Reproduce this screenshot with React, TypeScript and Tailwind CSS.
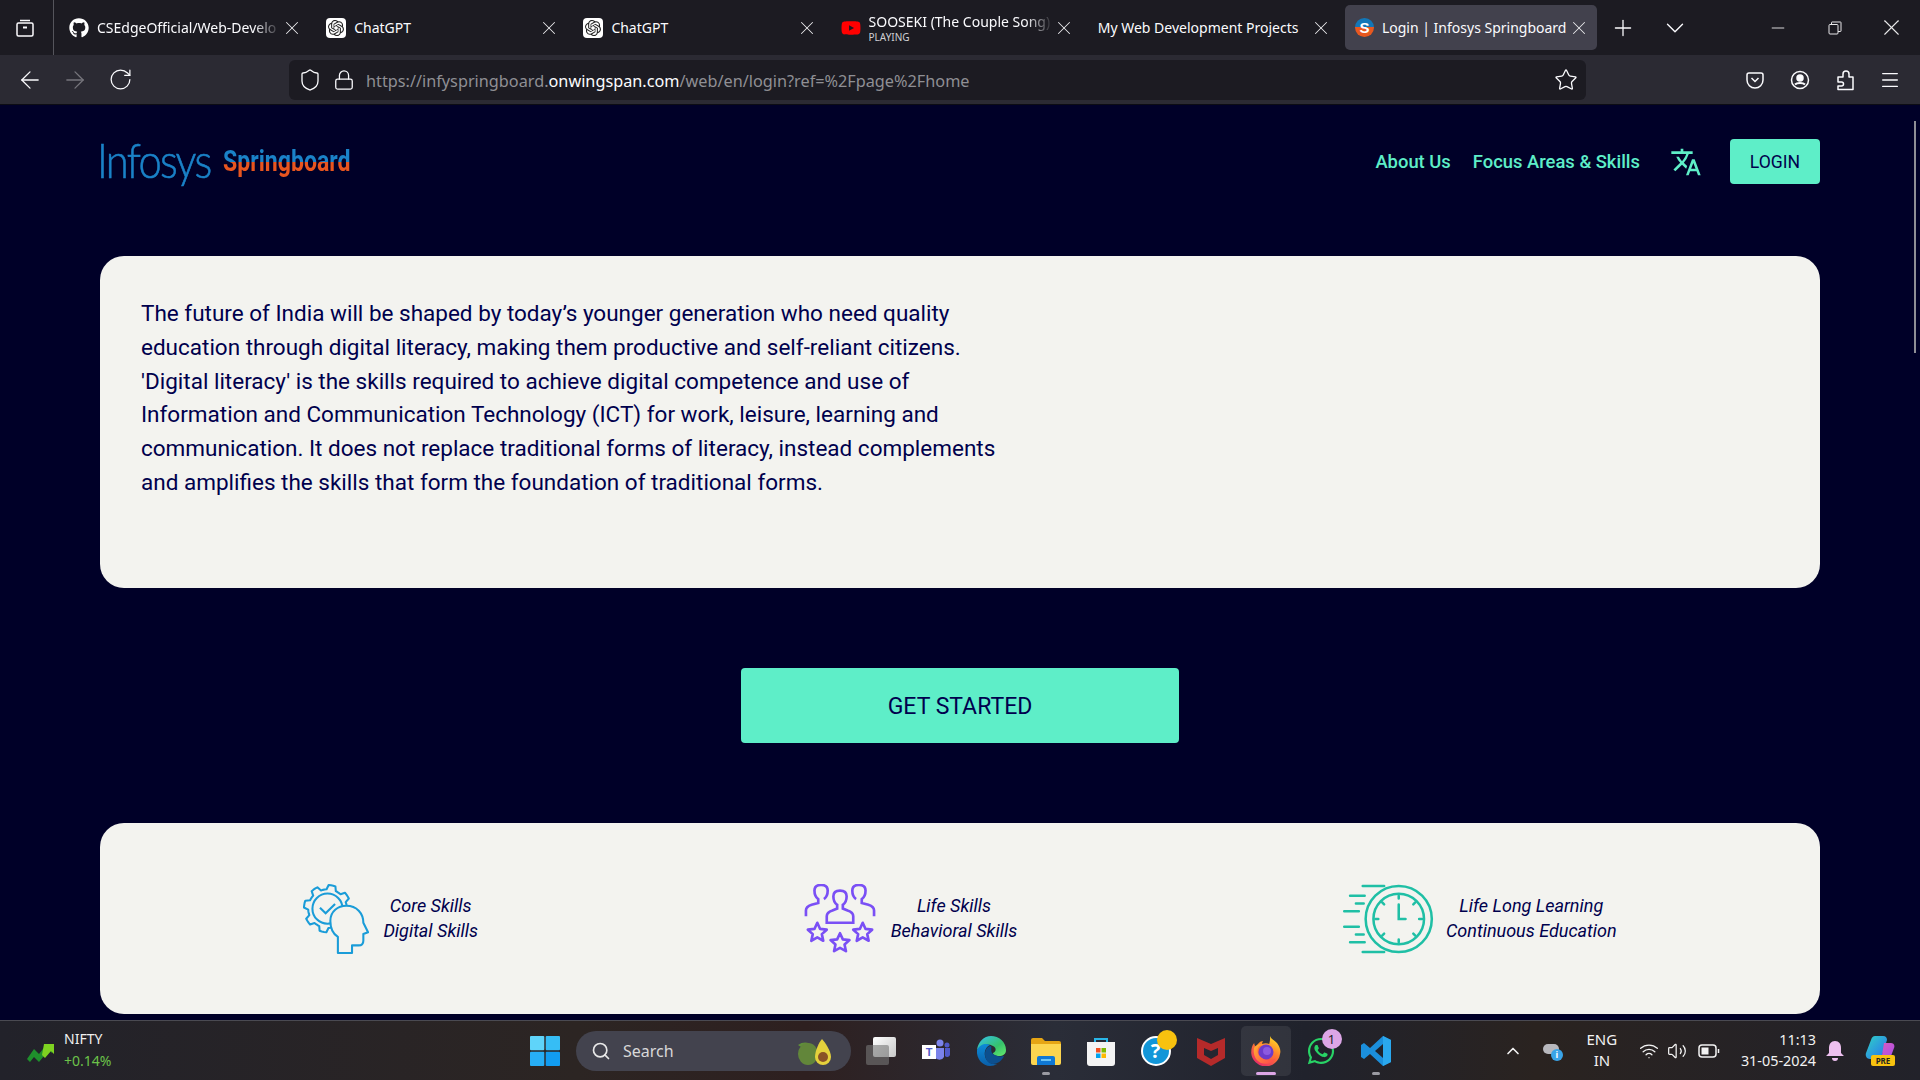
import { ArrowLeft, ArrowRight, ChevronDown, ChevronUp, Lock, Menu, Minus, Plus, RotateCw, Search, Shield, Star, Volume2, Wifi, X } from "lucide-react";
import { FaGithub, FaWhatsapp, FaYoutube } from "react-icons/fa";
import { MdTranslate } from "react-icons/md";
import { SiOpenai } from "react-icons/si";

const sysFont = "font-['Noto_Sans',sans-serif]";

function ChatIcon() {
  return (
    <span className="w-5 h-5 rounded-[4px] bg-white flex items-center justify-center shrink-0">
      <SiOpenai className="w-4 h-4 text-[#222]" />
    </span>
  );
}

function SpringIcon() {
  return (
    <span className="w-[19px] h-[19px] rounded-full bg-[linear-gradient(#1277b8_50%,#e8581f_50%)] flex items-center justify-center shrink-0 text-white text-[15px] font-bold leading-none font-['Liberation_Sans',sans-serif]">
      S
    </span>
  );
}

function Tab({ icon, title, sub, active, fade, wide }: { icon?: React.ReactNode; title: string; sub?: string; active?: boolean; fade?: boolean; wide?: boolean }) {
  return (
    <div className={`h-[45px] rounded-[5px] flex items-center pl-[10px] shrink-0 ${wide ? "w-[252px] pr-[7px]" : "w-[257.200px] pr-[13px]"} ${active ? "bg-[#42414d]" : ""}`}>
      {icon}
      <div className={`flex-1 min-w-0 overflow-hidden ${icon ? "ml-[8px]" : ""}`}>
        <div className={`text-[14px] leading-[18px] whitespace-nowrap text-[#fbfbfe] ${fade ? "[mask-image:linear-gradient(90deg,#000_85%,transparent)]" : ""}`}>{title}</div>
        {sub && <div className="text-[10px] leading-[12px] text-[#d0d0d4]">{sub}</div>}
      </div>
      <X className="w-[22px] h-[22px] text-[#e8e8ea] shrink-0" strokeWidth={1.1} />
    </div>
  );
}

function Browser() {
  return (
    <div className={sysFont}>
      <div className="h-[55px] bg-[#1c1b22] flex items-center">
        <div className="w-[54px] h-full border-r border-[#55555c] flex items-center justify-center shrink-0">
          <svg viewBox="0 0 20 20" className="w-5 h-5 -ml-[4px] text-[#fbfbfe]" fill="none" stroke="currentColor" strokeWidth="1.5">
            <path d="M5 2.500h10M2 6.500a1.500 1.500 0 0 1 1.500-1.500h13A1.500 1.500 0 0 1 18 6.500v10a1.500 1.500 0 0 1-1.500 1.500h-13A1.500 1.500 0 0 1 2 16.500z" />
            <path d="M8 9.500h4" strokeWidth="2" />
          </svg>
        </div>
        <div className="flex items-center pl-[5px]">
          <Tab icon={<FaGithub className="w-5 h-5 text-white shrink-0" />} title="CSEdgeOfficial/Web-Develo" fade />
          <Tab icon={<ChatIcon />} title="ChatGPT" />
          <Tab icon={<ChatIcon />} title="ChatGPT" />
          <Tab icon={<FaYoutube className="w-5 h-5 text-[#ff0000] shrink-0" />} title="SOOSEKI (The Couple Song)" sub="PLAYING" fade />
          <Tab title="My Web Development Projects" />
          <Tab icon={<SpringIcon />} title="Login | Infosys Springboard" active wide />
        </div>
        <Plus className="w-[26px] h-[26px] ml-[13px] text-[#fbfbfe] shrink-0" strokeWidth={1.2} />
        <ChevronDown className="w-[30px] h-[30px] ml-[24px] text-[#fbfbfe] shrink-0" strokeWidth={1.1} />
        <div className="ml-auto flex items-center pr-[1px]">
          <div className="w-[58px] flex justify-center"><Minus className="w-[20px] h-[20px] text-[#e8e8ea]" strokeWidth={1.1} /></div>
          <div className="w-[56px] flex justify-center">
            <svg viewBox="0 0 14 14" className="w-[14px] h-[14px] text-[#e8e8ea]" fill="none" stroke="currentColor" strokeWidth="1">
              <rect x="1" y="3.500" width="9" height="9.500" rx="1" />
              <path d="M3.500 3.500V1.500a.5.5 0 0 1 .5-.5h8.500a.5.5 0 0 1 .5.5V10a.5.5 0 0 1-.5.5H10" />
            </svg>
          </div>
          <div className="w-[56px] flex justify-center"><X className="w-[27px] h-[27px] text-[#e8e8ea]" strokeWidth={1} /></div>
        </div>
      </div>
      <div className="h-[50px] bg-[#2b2a33] flex items-center border-b border-[#0c0c14]">
        <div className="w-[60px] flex justify-center"><ArrowLeft className="w-[28px] h-[28px] text-[#fbfbfe]" strokeWidth={1.1} /></div>
        <div className="w-[30px] flex justify-center"><ArrowRight className="w-[28px] h-[28px] text-[#77767d]" strokeWidth={1.1} /></div>
        <div className="w-[60px] flex justify-center"><RotateCw className="w-[25px] h-[25px] text-[#fbfbfe]" strokeWidth={1.2} /></div>
        <div className="ml-[139px] w-[1297px] h-[40px] bg-[#1c1b22] rounded-[6px] flex items-center pl-[9px] pr-[8px]">
          <Shield className="w-[24px] h-[24px] text-[#fbfbfe]" strokeWidth={1.3} />
          <Lock className="w-[22px] h-[22px] ml-[11px] text-[#fbfbfe]" strokeWidth={1.4} />
          <div className="ml-[11px] pt-[4px] text-[16.260px] whitespace-nowrap text-[#8f8f94]">
            https://infyspringboard.<span className="text-[#fbfbfe]">onwingspan.com</span>/web/en/login?ref=%2Fpage%2Fhome
          </div>
          <Star className="w-[24px] h-[24px] ml-auto text-[#fbfbfe]" strokeWidth={1.3} />
        </div>
        <div className="ml-auto flex items-center pr-[8px]">
          <div className="w-[45px] flex justify-center">
            <svg viewBox="0 0 20 20" className="w-5 h-5 text-[#fbfbfe]" fill="none" stroke="currentColor" strokeWidth="1.5">
              <path d="M4 3h12a2 2 0 0 1 2 2v5a8 8 0 0 1-16 0V5a2 2 0 0 1 2-2z" />
              <path d="M6.500 8l3.500 3.500L13.500 8" />
            </svg>
          </div>
          <div className="w-[45px] flex justify-center">
            <svg viewBox="0 0 20 20" className="w-5 h-5 text-[#fbfbfe]" fill="none" stroke="currentColor" strokeWidth="1.5">
              <circle cx="10" cy="10" r="8.500" />
              <circle cx="10" cy="8" r="3" fill="currentColor" />
              <path d="M5 14.500c2-2 8-2 10 0" strokeWidth="2" />
            </svg>
          </div>
          <div className="w-[45px] flex justify-center">
            <svg viewBox="0 0 20 22" className="w-5 h-[22px] text-[#fbfbfe]" fill="none" stroke="currentColor" strokeWidth="1.500" strokeLinejoin="round">
              <path d="M3 20.500V17h3.500a2 2 0 0 0 0-4H3V8h5V5a3 3 0 0 1 6 0v3h4v12.500z" />
            </svg>
          </div>
          <div className="w-[45px] flex justify-center"><Menu className="w-[22px] h-[22px] text-[#fbfbfe]" strokeWidth={1.4} /></div>
        </div>
      </div>
    </div>
  );
}

const gearPoints = Array.from({ length: 64 }, (_, i) => {
  const angle = ((i + 0.5) / 64) * Math.PI * 2;
  const tooth = Math.floor(i / 4) % 2 === 0;
  const r = tooth ? 25 : 20.500;
  return `${(26 + r * Math.cos(angle)).toFixed(1)},${(26 + r * Math.sin(angle)).toFixed(1)}`;
}).join(" ");

function GearHead() {
  return (
    <svg viewBox="0 0 70 74" className="w-[66px] h-[70px] shrink-0" fill="none" stroke="#1a9cd8" strokeWidth="2.200">
      <polygon points={gearPoints} strokeLinejoin="round" />
      <circle cx="26" cy="26" r="16" />
      <path d="M18 25l6 6 10-10" />
      <path d="M37 73V56C31 52 29 45 29 39 29 29 37 23 46 23 57 23 64 31 64 41L69 51 64 53V60C64 63 62 65 59 65H52V73z" fill="#f3f3ef" strokeLinejoin="round" />
    </svg>
  );
}

function StarPath({ x, y }: { x: number; y: number }) {
  return <path transform={`translate(${x} ${y})`} d="M10 0l3 6.500 7 .8-5.200 4.700 1.500 7L10 15.500l-6.300 3.500 1.500-7L0 7.300l7-.8z" strokeLinejoin="round" />;
}

function People() {
  return (
    <svg viewBox="0 0 76 74" className="w-[74px] h-[70px] shrink-0" fill="none" stroke="#7a4ff5" strokeWidth="2.800">
      <path d="M2 34v-6c0-3 3-5 6-6l7-2v-4c-3-2-4-6-4-9 0-4 3-6 7-6s7 2 7 6c0 3-1 7-4 9" />
      <path d="M74 34v-6c0-3-3-5-6-6l-7-2v-4c3-2 4-6 4-9 0-4-3-6-7-6s-7 2-7 6c0 3 1 7 4 9" />
      <path d="M24 41V34c0-3 3-5 6-6l5-2v-4c-3-2-4-6-4-9 0-4 3-6 7-6s7 2 7 6c0 3-1 7-4 9v4l5 2c3 1 6 3 6 6v7z" />
      <StarPath x={4} y={41} />
      <StarPath x={28} y={52} />
      <StarPath x={52} y={41} />
    </svg>
  );
}

function ClockIcon() {
  return (
    <svg viewBox="0 0 94 74" className="w-[94px] h-[72px] shrink-0" fill="none" stroke="#1fbfa5" strokeWidth="2.600" strokeLinecap="round">
      <circle cx="57" cy="37" r="34" />
      <circle cx="57" cy="37" r="26" />
      <path d="M57 22v15h7M57 13v3M57 58v3M33 37h3M78 37h3M40 20l2 2M74 54l-2-2M74 20l-2 2M40 54l2-2" />
      <path d="M20 3h22M7 13h15M13 21h8M1 29h15M1 45h15M13 53h8M7 61h15M20 71h22" />
    </svg>
  );
}

function Skill({ icon, a, b, gap }: { icon: React.ReactNode; a: string; b: string; gap: string }) {
  return (
    <div className={`flex items-center ${gap}`}>
      {icon}
      <div className="-mt-[2px] text-center italic text-[18px] leading-[25px] text-[#00004d]">
        <div>{a}</div>
        <div>{b}</div>
      </div>
    </div>
  );
}

function Page() {
  return (
    <div className="flex-1 min-h-0 overflow-hidden bg-[#000028] relative font-['Roboto',sans-serif]">
      <div className="absolute right-[4px] top-[16px] w-[2px] h-[232px] bg-[#8e8e96]" />
      <div className="mx-[100px]">
        <header className="h-[151px] pt-[32px] flex items-start">
          <div className="flex items-start h-[46px] -ml-[3px]">
            <div className="w-[126px]">
              <span className="block w-max origin-left scale-x-[.87] text-[48px] leading-[46px] font-light tracking-[-2px] [-webkit-text-stroke:0.6px_#1a82c8] text-[#1a82c8] font-['Lato',sans-serif]">Infosys</span>
            </div>
            <span className="block w-max mt-[6px] text-[30px] leading-[36px] font-bold whitespace-nowrap origin-left scale-x-[.77] text-transparent bg-clip-text bg-[linear-gradient(#1a82c8_52%,#e8551f_52%)] font-['Roboto',sans-serif]">
              Springboard
            </span>
          </div>
          <nav className="ml-auto h-[45px] mt-[2px] flex items-center">
            <a className="text-[18.400px] font-medium text-[#5eeec8]">About Us</a>
            <a className="ml-[22px] text-[18.400px] font-medium text-[#5eeec8]">Focus Areas &amp; Skills</a>
            <MdTranslate className="ml-[30px] w-[32px] h-[32px] text-[#5eeec8]" />
            <button className="ml-[28px] w-[90px] h-[45px] pt-[1px] rounded-[4px] bg-[#5eeec8] text-[17.600px] text-[#00004d]">LOGIN</button>
          </nav>
        </header>
        <section className="h-[332px] rounded-[24px] bg-[#f3f3ef] pl-[41px] pt-[41px]">
          <p className="w-[870px] text-[22.500px] leading-[33.800px] text-[#00004d]">
            The future of India will be shaped by today’s younger generation who need quality education through digital literacy, making them productive and self-reliant citizens. 'Digital literacy' is the skills required to achieve digital competence and use of Information and Communication Technology (ICT) for work, leisure, learning and communication. It does not replace traditional forms of literacy, instead complements and amplifies the skills that form the foundation of traditional forms.
          </p>
        </section>
        <div className="h-[235px] flex items-center justify-center">
          <button className="w-[438px] h-[75px] pt-[3px] rounded-[4px] bg-[#5eeec8] text-[23px] text-[#00004d]">GET STARTED</button>
        </div>
        <section className="h-[191px] rounded-[24px] bg-[#f3f3ef] px-[41px] flex items-center justify-around">
          <Skill icon={<GearHead />} a="Core Skills" b="Digital Skills" gap="gap-[14px]" />
          <Skill icon={<People />} a="Life Skills" b="Behavioral Skills" gap="gap-[14px]" />
          <Skill icon={<ClockIcon />} a="Life Long Learning" b="Continuous Education" gap="gap-[10px]" />
        </section>
      </div>
    </div>
  );
}

function TaskIcon({ children, active, pill }: { children: React.ReactNode; active?: boolean; pill?: string }) {
  return (
    <div className="w-[55px] h-[50px] flex items-center justify-center relative shrink-0">
      {active && <div className="absolute inset-x-[2.500px] inset-y-0 rounded-[5px] bg-[#ffffff14]" />}
      <div className="relative">{children}</div>
      {pill && <div className={`absolute bottom-[1px] left-1/2 -translate-x-1/2 h-[3px] rounded-full ${pill}`} />}
    </div>
  );
}

function Taskbar() {
  return (
    <div className={`h-[60px] shrink-0 border-t border-[#4a4a52] bg-[linear-gradient(90deg,#22222a,#2c2523_30%,#2e2020_42%,#2a2d38_55%,#20222c_68%,#2a2320_80%,#22222a)] flex items-center ${sysFont}`}>
      <div className="w-[530px] pl-[26px] flex items-center shrink-0">
        <svg viewBox="0 0 30 24" className="w-[30px] h-[24px]">
          <path d="M1 20l7-10 5 5 7-9 6 0 0 8-3-3-10 12-5-5-4 5z" fill="#1f8f2c" />
          <path d="M18 5h10v10l-3-3-6 7-3-3z" fill="#7ed321" />
        </svg>
        <div className="ml-[8px] -mt-[1px]">
          <div className="text-[14px] leading-[22px] text-[#f0f0f0]">NIFTY</div>
          <div className="text-[14px] leading-[22px] text-[#6cc24a]">+0.14%</div>
        </div>
      </div>
      <svg viewBox="0 0 30 30" className="w-[30px] h-[30px] shrink-0">
        <rect x="0" y="0" width="14.300" height="14.300" rx="1" fill="#5fd4f9" />
        <rect x="15.700" y="0" width="14.300" height="14.300" rx="1" fill="#36bdf5" />
        <rect x="0" y="15.700" width="14.300" height="14.300" rx="1" fill="#27aef5" />
        <rect x="15.700" y="15.700" width="14.300" height="14.300" rx="1" fill="#119cf0" />
      </svg>
      <div className="ml-[16px] w-[275px] h-[40px] rounded-full bg-[#43434e] flex items-center pl-[15px] pr-[18px] shrink-0">
        <Search className="w-5 h-5 text-[#e8e8e8]" strokeWidth={2} />
        <span className="ml-[12px] text-[16px] text-[#d8d8d8]">Search</span>
        <svg viewBox="0 0 38 28" className="ml-auto w-[38px] h-[28px]">
          <path d="M3 8c5-4 12-3 14 1-5 2-11 2-14-1z" fill="#5f8f3a" />
          <ellipse cx="13" cy="17" rx="10" ry="11" fill="#62863a" />
          <path d="M27 2c3 3 9 12 9 18a8 8 0 0 1-16 0c0-6 4-15 7-18z" fill="#e5d13c" />
          <circle cx="28" cy="20" r="5" fill="#8a5226" />
        </svg>
      </div>
      <div className="flex items-center ml-[2px]">
        <TaskIcon>
          <div className="w-[30px] h-[28px] relative">
            <div className="absolute right-0 top-0 w-[23px] h-[20px] rounded-[2px] bg-[linear-gradient(135deg,#fff,#c8c8c8)]" />
            <div className="absolute left-0 bottom-0 w-[23px] h-[20px] rounded-[2px] bg-[#77777799]" />
          </div>
        </TaskIcon>
        <TaskIcon>
          <svg viewBox="0 0 28 24" className="w-[28px] h-[24px]">
            <circle cx="18" cy="4" r="3.500" fill="#7b83eb" />
            <circle cx="25" cy="6" r="2.500" fill="#5059c9" />
            <path d="M13 9h9v9a5 5 0 0 1-9 0z" fill="#7b83eb" />
            <path d="M23 9h5v7a3 3 0 0 1-5 1z" fill="#5059c9" />
            <rect x="0" y="6" width="14" height="14" fill="#fff" />
            <text x="7" y="17" textAnchor="middle" fontSize="11" fontWeight="700" fill="#5059c9" fontFamily="Liberation Sans">T</text>
          </svg>
        </TaskIcon>
        <TaskIcon>
          <svg viewBox="0 0 30 30" className="w-[30px] h-[30px]">
            <defs>
              <linearGradient id="edgeA" x1="0" y1="0" x2="1" y2="1"><stop offset="0" stopColor="#35c1f1" /><stop offset=".6" stopColor="#36c26b" /><stop offset="1" stopColor="#66eb6e" /></linearGradient>
              <linearGradient id="edgeB" x1="0" y1="0" x2="0" y2="1"><stop offset="0" stopColor="#0c8bd8" /><stop offset="1" stopColor="#0a5ea8" /></linearGradient>
            </defs>
            <path d="M1 14C2 6 8 0 15 0c8 0 15 6 15 14 0 4-3 6-7 6-3 0-6-1-6-3 3-1 4-5 0-7-6-3-12-1-16 4z" fill="url(#edgeA)" />
            <path d="M1 14c3-6 9-7 13-5-4 2-6 6-5 11 1 5 6 9 12 8-2 1-4 2-7 2C7 30 0 23 1 14z" fill="url(#edgeB)" />
            <path d="M9 18c0-5 3-8 6-8 1 3-1 5 2 8 3 2 7 3 11 2-2 5-7 8-11 8-5 0-8-5-8-10z" fill="#0c4f8e" />
          </svg>
        </TaskIcon>
        <TaskIcon pill="w-[8px] bg-[#9a9aa2]">
          <svg viewBox="0 0 30 28" className="w-[30px] h-[28px]">
            <path d="M0 3a2 2 0 0 1 2-2h9l3 3h14a2 2 0 0 1 2 2v4H0z" fill="#e6a514" />
            <path d="M0 7h30v19a2 2 0 0 1-2 2H2a2 2 0 0 1-2-2z" fill="#fcd54f" />
            <path d="M6 21a2 2 0 0 1 2-2h14a2 2 0 0 1 2 2v7H6z" fill="#0f78d4" />
            <rect x="10" y="22" width="10" height="2" fill="#6cc4f5" />
          </svg>
        </TaskIcon>
        <TaskIcon>
          <svg viewBox="0 0 30 30" className="w-[30px] h-[30px]">
            <path d="M9 8V3h12v5" fill="none" stroke="#29b6e8" strokeWidth="2" />
            <path d="M1 6h28v21a3 3 0 0 1-3 3H4a3 3 0 0 1-3-3z" fill="#f4f4f4" />
            <rect x="10" y="12" width="4.500" height="4.500" fill="#f25022" />
            <rect x="15.500" y="12" width="4.500" height="4.500" fill="#7fba00" />
            <rect x="10" y="17.500" width="4.500" height="4.500" fill="#00a4ef" />
            <rect x="15.500" y="17.500" width="4.500" height="4.500" fill="#ffb900" />
          </svg>
        </TaskIcon>
        <TaskIcon>
          <div className="w-[30px] h-[30px] rounded-full bg-[#1296d8] border-2 border-white flex items-center justify-center text-white text-[20px] font-bold leading-none">?</div>
          <div className="absolute -right-[6px] -top-[6px] w-[20px] h-[20px] rounded-full bg-[#f8c20f]" />
        </TaskIcon>
        <TaskIcon>
          <svg viewBox="0 0 28 30" className="w-[28px] h-[30px]">
            <path fillRule="evenodd" d="M0 2l14 6 14-6v20l-14 8-14-8zM7 12v7l7 4 7-4v-7l-7 3z" fill="#b52a2a" />
          </svg>
        </TaskIcon>
        <TaskIcon active pill="w-[20px] bg-[#dca6e6]">
          <svg viewBox="0 0 30 30" className="w-[30px] h-[30px]">
            <defs>
              <linearGradient id="foxA" x1="0.800" y1="0" x2="0.200" y2="1"><stop offset="0" stopColor="#ffe226" /><stop offset=".45" stopColor="#ff7a2e" /><stop offset="1" stopColor="#e3246e" /></linearGradient>
              <linearGradient id="foxB" x1="0" y1="0" x2="1" y2="1"><stop offset="0" stopColor="#ffb52e" /><stop offset="1" stopColor="#ff3f4f" /></linearGradient>
            </defs>
            <path d="M19 0c1 3 4 4 7 7 3 4 4 8 3 11a14.500 14.500 0 0 1-28.800-1c0-5 1-8 3-10 0 2 1 3 2 4 1-3 4-6 7-6-1 1-1 2-1 3 2-1 5-1 7 0 1-3 1-6 .8-8z" fill="url(#foxA)" />
            <circle cx="15" cy="16" r="7.500" fill="#6b3bcb" />
            <circle cx="16" cy="15" r="4" fill="#8c5ae0" />
            <path d="M3 12c-1 6 1 12 7 15 6 2 12 0 15-5-4 3-10 3-14 0-4-2-5-6-4-10 1-2 3-3 6-3-2-2-8-1-10 3z" fill="url(#foxB)" />
          </svg>
        </TaskIcon>
        <TaskIcon>
          <FaWhatsapp className="w-[30px] h-[30px] text-[#28d366]" />
          <div className="absolute -right-[6px] -top-[7px] w-[20px] h-[20px] rounded-full bg-[#dca6e6] text-[#222] text-[13px] leading-[20px] text-center">1</div>
        </TaskIcon>
        <TaskIcon pill="w-[8px] bg-[#9a9aa2]">
          <svg viewBox="0 0 30 30" className="w-[30px] h-[30px]">
            <path d="M22 0l8 4v22l-8 4-13-12-6 5-3-2v-12l3-2 6 5z" fill="#1b8fdc" />
            <path d="M22 8l-8 7 8 7z" fill="#20232c" />
            <path d="M22 0l8 4v22l-8 4z" fill="#2aa8ee" />
          </svg>
        </TaskIcon>
      </div>
      <div className="ml-auto flex items-center text-[#f2f2f2] pr-[25px]">
        <ChevronUp className="w-5 h-5" strokeWidth={2} />
        <div className="ml-[20px] relative w-[20px] h-[20px]">
          <div className="absolute left-0 top-[3px] w-[16px] h-[10px] rounded-full bg-[#b8b8bd]" />
          <div className="absolute right-0 bottom-0 w-[12px] h-[12px] rounded-full bg-[#3aa4e8] text-[9px] leading-[12px] text-center text-white font-bold">i</div>
        </div>
        <div className="ml-[17px] -mt-[2px] w-[44px] text-center text-[15px] leading-[21px]">
          <div>ENG</div>
          <div>IN</div>
        </div>
        <Wifi className="ml-[15px] w-5 h-5" strokeWidth={1.6} />
        <Volume2 className="ml-[8px] w-5 h-5" strokeWidth={1.5} />
        <svg viewBox="0 0 22 14" className="ml-[11px] w-[22px] h-[14px]" fill="none" stroke="currentColor" strokeWidth="1.500">
          <rect x="1" y="1" width="17" height="12" rx="3" />
          <rect x="3.500" y="3.500" width="7" height="7" fill="currentColor" stroke="none" />
          <path d="M20.500 5v4" />
        </svg>
        <div className="ml-[21px] -mt-[2px] text-right text-[14.400px] leading-[21px] whitespace-nowrap">
          <div>11:13</div>
          <div>31-05-2024</div>
        </div>
        <svg viewBox="0 0 18 20" className="ml-[10px] w-[18px] h-[20px]" fill="#eec0f0">
          <path d="M9 0c4 0 6 3 6 7v5l3 3H0l3-3V7c0-4 2-7 6-7z" />
          <path d="M6 17h6a3 3 0 0 1-6 0z" />
        </svg>
        <div className="ml-[21px] relative w-[30px] h-[30px]">
          <svg viewBox="0 0 30 24" className="absolute inset-x-0 top-0 w-[30px] h-[24px]">
            <defs>
              <linearGradient id="copA" x1="0" y1="0" x2="1" y2="1"><stop offset="0" stopColor="#2fd3c5" /><stop offset="1" stopColor="#2a6ff0" /></linearGradient>
              <linearGradient id="copB" x1="0" y1="0" x2="1" y2="1"><stop offset="0" stopColor="#e35bb8" /><stop offset="1" stopColor="#a04ff0" /></linearGradient>
            </defs>
            <path d="M10 0h8c3 0 4 2 4 4l-5 15c-1 3-3 4-6 4H5c-3 0-5-3-4-6L6 4c1-3 2-4 4-4z" fill="url(#copA)" />
            <path d="M19 7h7c3 0 4 3 3 5l-3 8c-1 3-3 4-5 4h-8c2-1 3-3 4-5z" fill="url(#copB)" />
          </svg>
          <div className="absolute left-[6px] bottom-0 w-[24px] h-[11px] rounded-[2px] bg-[#f8c20f] text-[8px] leading-[11px] font-bold text-center text-[#222]">PRE</div>
        </div>
      </div>
    </div>
  );
}

export default function App() {
  return (
    <div className="h-screen w-full flex flex-col overflow-hidden">
      <Browser />
      <Page />
      <Taskbar />
    </div>
  );
}
